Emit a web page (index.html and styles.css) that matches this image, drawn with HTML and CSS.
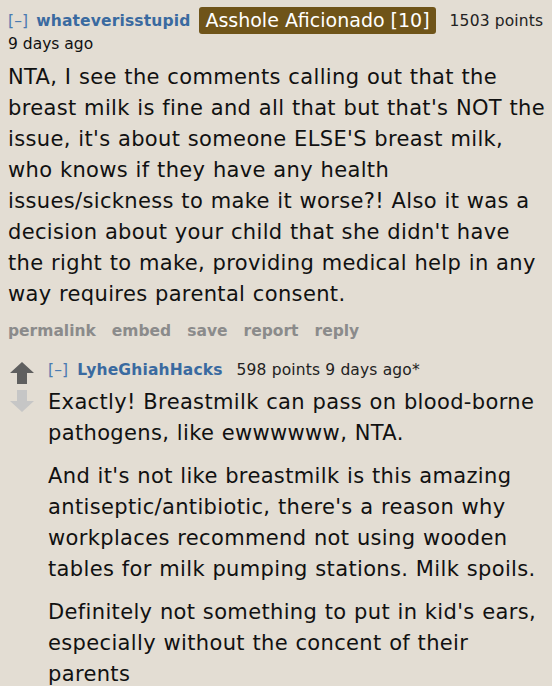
FILE: index.html
```html
<!DOCTYPE html>
<html>
<head>
<meta charset="utf-8">
<link rel="stylesheet" href="styles.css">
</head>
<body>
<div class="comment">
  <div class="tagline">
    <span class="toggle">[–]</span>
    <span class="author">whateverisstupid</span>
    <span class="flair">Asshole Aficionado [10]</span>
    <span class="score">1503 points</span>
  </div>
  <div class="time">9 days ago</div>
  <div class="body">
    <p>NTA, I see the comments calling out that the breast milk is fine and all that but that's NOT the issue, it's about someone ELSE'S breast milk, who knows if they have any health issues/sickness to make it worse?! Also it was a decision about your child that she didn't have the right to make, providing medical help in any way requires parental consent.</p>
  </div>
  <ul class="actions">
    <li>permalink</li><li>embed</li><li>save</li><li>report</li><li>reply</li>
  </ul>
  <div class="child">
    <div class="votes">
      <svg class="arrow" width="24" height="22" viewBox="0 0 24 22"><path d="M12 0 L24 11 L17 11 L17 22 L7 22 L7 11 L0 11 Z" fill="#5f5f5f"/></svg>
      <svg class="arrow down" width="24" height="22" viewBox="0 0 24 22"><path d="M7 0 L17 0 L17 11 L24 11 L12 22 L0 11 L7 11 Z" fill="#c6c6c6"/></svg>
    </div>
    <div class="entry">
      <div class="tagline small">
        <span class="toggle">[–]</span>
        <span class="author">LyheGhiahHacks</span>
        <span class="score">598 points 9 days ago*</span>
      </div>
      <div class="body">
        <p>Exactly! Breastmilk can pass on blood-borne pathogens, like ewwwwww, NTA.</p>
        <p>And it's not like breastmilk is this amazing antiseptic/antibiotic, there's a reason why workplaces recommend not using wooden tables for milk pumping stations. Milk spoils.</p>
        <p>Definitely not something to put in kid's ears, especially without the concent of their parents</p>
      </div>
    </div>
  </div>
</div>
</body>
</html>
```
FILE: styles.css
```css
html, body {
  margin: 0;
  padding: 0;
  background: #e3ddd3;
}
body {
  font-family: "DejaVu Sans", Verdana, sans-serif;
  color: #111;
}
.comment {
  padding: 7px 0 0 8px;
}
.tagline {
  display: flex;
  align-items: center;
  font-size: 15.5px;
  letter-spacing: 0.15px;
  height: 27px;
}
.toggle {
  color: #4a7ab0;
  margin-right: 8px;
}
.author {
  color: #3a6aa0;
  font-weight: bold;
  margin-right: 9px;
}
.flair {
  background: #6f5419;
  color: #fff;
  font-size: 19px;
  letter-spacing: 0;
  padding: 0 6px;
  height: 27px;
  line-height: 27px;
  border-radius: 3px;
  margin-right: 14px;
}
.score {
  color: #222;
}
.time {
  font-size: 15.5px;
  line-height: 18px;
  margin-top: 1px;
}
.body {
  font-size: 21px;
  letter-spacing: 0.35px;
  word-spacing: 0.5px;
  line-height: 31px;
}
.body p {
  margin: 0;
}
.comment > .body {
  margin-top: 9px;
  padding-right: 4px;
}
.actions {
  list-style: none;
  margin: 12px 0 0 0;
  padding: 0;
  display: flex;
  gap: 16px;
  font-size: 15.5px;
  font-weight: bold;
  color: #8b8b8b;
}
.child {
  display: flex;
  margin-top: 19px;
}
.votes {
  display: flex;
  flex-direction: column;
  width: 38px;
  padding-left: 2px;
  padding-top: 3px;
  gap: 6px;
}
.entry {
  flex: 1;
  padding-right: 6px;
}
.tagline.small {
  height: 22px;
}
.tagline.small .toggle {
  margin-right: 9px;
}
.tagline.small .author {
  margin-right: 14px;
}
.entry .body {
  margin-top: 6px;
}
.entry .body p + p {
  margin-top: 12px;
}
```
